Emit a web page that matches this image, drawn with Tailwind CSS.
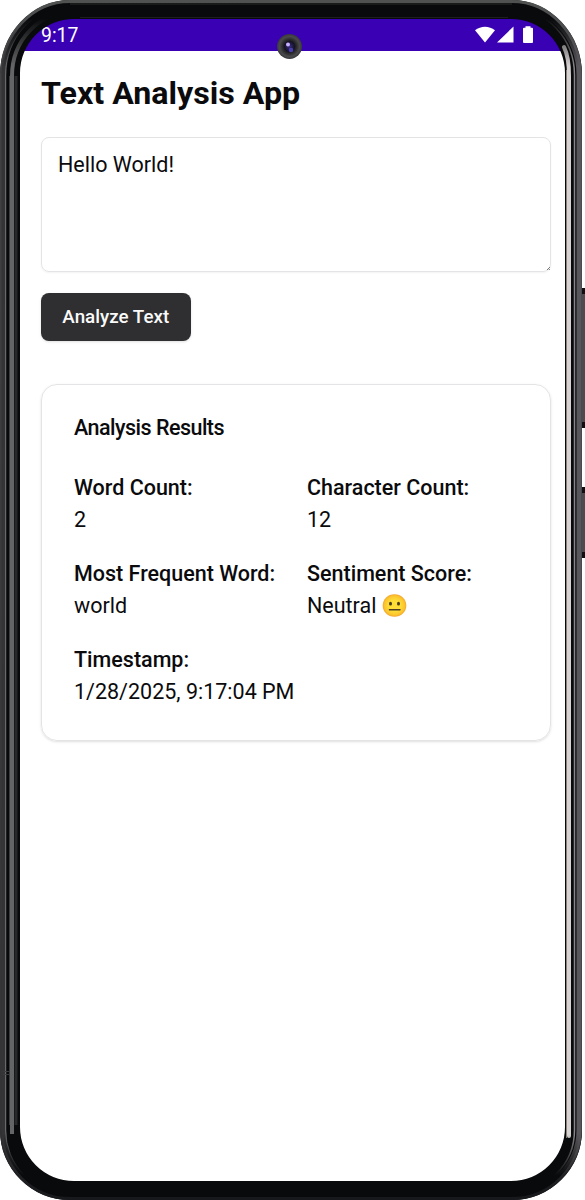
<!DOCTYPE html>
<html lang="en">
<head>
<meta charset="utf-8">
<title>Text Analysis App</title>
<script src="https://cdn.jsdelivr.net/npm/@tailwindcss/browser@4"></script>
</head>
<body class="relative h-[1200px] w-[585px] overflow-hidden bg-white font-['Roboto',sans-serif] text-[#0b0b0d]">
  <main class="ml-5 h-[1181px] w-[545px] pt-[19px]">
    <header class="flex h-8 items-center justify-between rounded-t-[32px] bg-[#3a00b3] pl-[21px] pr-[31px] text-white">
      <span class="pt-px text-[19.4px] leading-8">9:17</span>
      <svg class="h-[18px] w-[59px]" viewBox="0 0 59 18" fill="#fff">
        <path d="M0 4.300C5.800-.4 14.200-.4 20 4.300L10 16.500Z"/>
        <path d="M38.500 .5V16.500H22Z"/>
        <path d="M50.500 .3h5v1.500h1.500q1 0 1 1v13.200q0 1-1 1h-8q-1 0-1-1v-13.200q0-1 1-1h1.500z"/>
      </svg>
    </header>
    <div class="flex flex-col items-start pl-[21px] pr-[14px] pt-[21px]">
      <h1 class="text-[32.2px] font-bold leading-[43px]">Text Analysis App</h1>
      <div class="relative mt-[22px] h-[134.5px] w-[510px]">
        <textarea class="block size-full resize-none rounded-[8px] border border-[#e4e4e7] px-4 py-[11px] text-[21.5px] leading-[32px] shadow-xs outline-none">Hello World!</textarea>
        <svg class="absolute bottom-[2px] right-[1px] size-[3px]" viewBox="0 0 4 4" stroke="#555" stroke-width="1"><path d="M0 4 4 0M2.500 4 4 2.500"/></svg>
      </div>
      <button class="mt-[21.5px] h-12 w-[149.5px] rounded-[8px] bg-[#2f2f31] pt-px text-[18.8px] font-medium text-[#fafafa] shadow-sm">Analyze Text</button>
      <section class="mt-[43px] h-[357px] w-[510px] rounded-[16px] border border-[#e4e4e7] px-8 pt-[32px] shadow-sm">
        <h2 class="text-[21.5px] font-medium leading-[21px] tracking-[-0.52px]">Analysis Results</h2>
        <dl class="mt-[33.5px] grid grid-cols-[201px_1fr] gap-x-8 gap-y-[22px] whitespace-nowrap text-[21.5px] leading-[32px]">
          <div><dt class="font-medium">Word Count:</dt><dd>2</dd></div>
          <div><dt class="font-medium">Character Count:</dt><dd>12</dd></div>
          <div><dt class="font-medium">Most Frequent Word:</dt><dd>world</dd></div>
          <div><dt class="font-medium">Sentiment Score:</dt>
            <dd class="flex items-center gap-[6px]">Neutral
              <svg class="-mt-px size-[25px]" viewBox="0 0 25 25" role="img" aria-label="😐">
                <defs><radialGradient id="face"><stop offset=".5" stop-color="#fddc38"/><stop offset=".85" stop-color="#fbc52c"/><stop offset="1" stop-color="#f3a22f"/></radialGradient></defs>
                <ellipse cx="12.500" cy="12.500" rx="11.800" ry="11.300" fill="url(#face)"/>
                <g fill="#493a20"><ellipse cx="8.500" cy="10.700" rx="1.500" ry="1.900"/><ellipse cx="16.500" cy="10.700" rx="1.500" ry="1.900"/><rect x="6.700" y="16" width="12" height="1.500" rx=".75"/></g>
              </svg>
            </dd></div>
          <div><dt class="font-medium">Timestamp:</dt><dd>1/28/2025, 9:17:04 PM</dd></div>
        </dl>
      </section>
    </div>
  </main>
  <!-- Phone shell laid over the screen -->
  <svg class="pointer-events-none absolute inset-0" width="585" height="1200" viewBox="0 0 585 1200" fill="none">
    <defs>
      <linearGradient id="fade" gradientUnits="userSpaceOnUse" x1="0" y1="0" x2="0" y2="1200">
        <stop offset=".015" stop-color="#fff" stop-opacity="0"/><stop offset=".055" stop-color="#fff"/><stop offset=".945" stop-color="#fff"/><stop offset=".98" stop-color="#fff" stop-opacity="0"/>
      </linearGradient>
      <linearGradient id="rim" gradientUnits="userSpaceOnUse" x1="0" y1="0" x2="0" y2="1200">
        <stop stop-color="#505252"/><stop offset=".06" stop-color="#414143"/><stop offset=".94" stop-color="#333336"/><stop offset="1" stop-color="#17181b"/>
      </linearGradient>
      <mask id="sides" maskUnits="userSpaceOnUse" x="0" y="0" width="585" height="1200"><rect width="585" height="1200" fill="url(#fade)"/></mask>
      <radialGradient id="lens"><stop stop-color="#382b84"/><stop offset=".4" stop-color="#151323"/><stop offset=".55" stop-color="#29292c"/><stop offset=".8" stop-color="#4a4a4c"/><stop offset="1" stop-color="#38383b"/></radialGradient>
    </defs>
    <rect x="580" y="288" width="5" height="140" rx="1" fill="#4d4b50"/><path d="M580 288h5v6h-5zM580 422h5v6h-5z" fill="#101013"/>
    <rect x="580" y="487" width="5" height="71" rx="1" fill="#4d4b50"/><path d="M580 487h5v6h-5zM580 552h5v6h-5z" fill="#101013"/>
    <path fill="#090a0b" fill-rule="evenodd" d="M70 0H512A70 75 0 0 1 582 75V1130A70 70 0 0 1 512 1200H70A70 70 0 0 1 0 1130V75A70 75 0 0 1 70 0ZM74 19A54 54 0 0 0 20 73V1127A54 54 0 0 0 74 1181H511A54 54 0 0 0 565 1127V73A54 54 0 0 0 511 19Z"/>
    <path stroke="url(#rim)" stroke-width="3" d="M70 1.500H512A68.500 73.500 0 0 1 580.500 75V1130A68.500 68.500 0 0 1 512 1198.500H70A68.500 68.500 0 0 1 1.500 1130V75A68.500 73.500 0 0 1 70 1.500Z"/>
    <g mask="url(#sides)">
      <path stroke="#343436" stroke-width="5" d="M68 5A64 70 0 0 0 4 75V1130A64 64 0 0 0 68 1195"/>
      <path stroke="#69696c" stroke-width="1" d="M69.500 7A64 68 0 0 0 5.500 75V1130A64 64 0 0 0 69.500 1194"/>
      <path stroke="#646566" stroke-width="4" d="M72 12A60 64 0 0 0 12 76V1134"/>
      <path stroke="#3c3c3f" stroke-width="1" d="M9.500 76V1125"/>
      <path stroke="#29292b" stroke-width="3" d="M16 76V1125"/>
      <path stroke="#59575c" stroke-width="5" d="M512 5A67 70 0 0 1 579 75V1130A67 65 0 0 1 512 1195"/>
      <path stroke="#89858a" stroke-width="1.500" d="M512 9A62 66 0 0 1 574.500 75V1130A62 62 0 0 1 512 1192"/>
      <path stroke="#d7d3d2" stroke-width="4" stroke-linecap="round" d="M564 47Q569 57 569 76V1136"/>
      <path stroke="#8a8178" stroke-width="1" d="M566.500 70V1138"/>
    </g>
    <path stroke="#2b2d2d" stroke-width="1" d="M70 4H512"/>
    <path stroke="#1e1e20" stroke-width="1" d="M80 17.500H508"/>
    <g fill="#3c3c3e"><rect x="3" y="1071" width="6" height="1"/><rect x="3" y="1074" width="6" height="1"/></g>
    <circle cx="289.500" cy="46.500" r="12.500" fill="url(#lens)"/>
    <circle cx="288" cy="44.500" r="2" fill="#c9b0ff"/><circle cx="291" cy="50" r="2.300" fill="#493caf"/>
  </svg>
</body>
</html>
